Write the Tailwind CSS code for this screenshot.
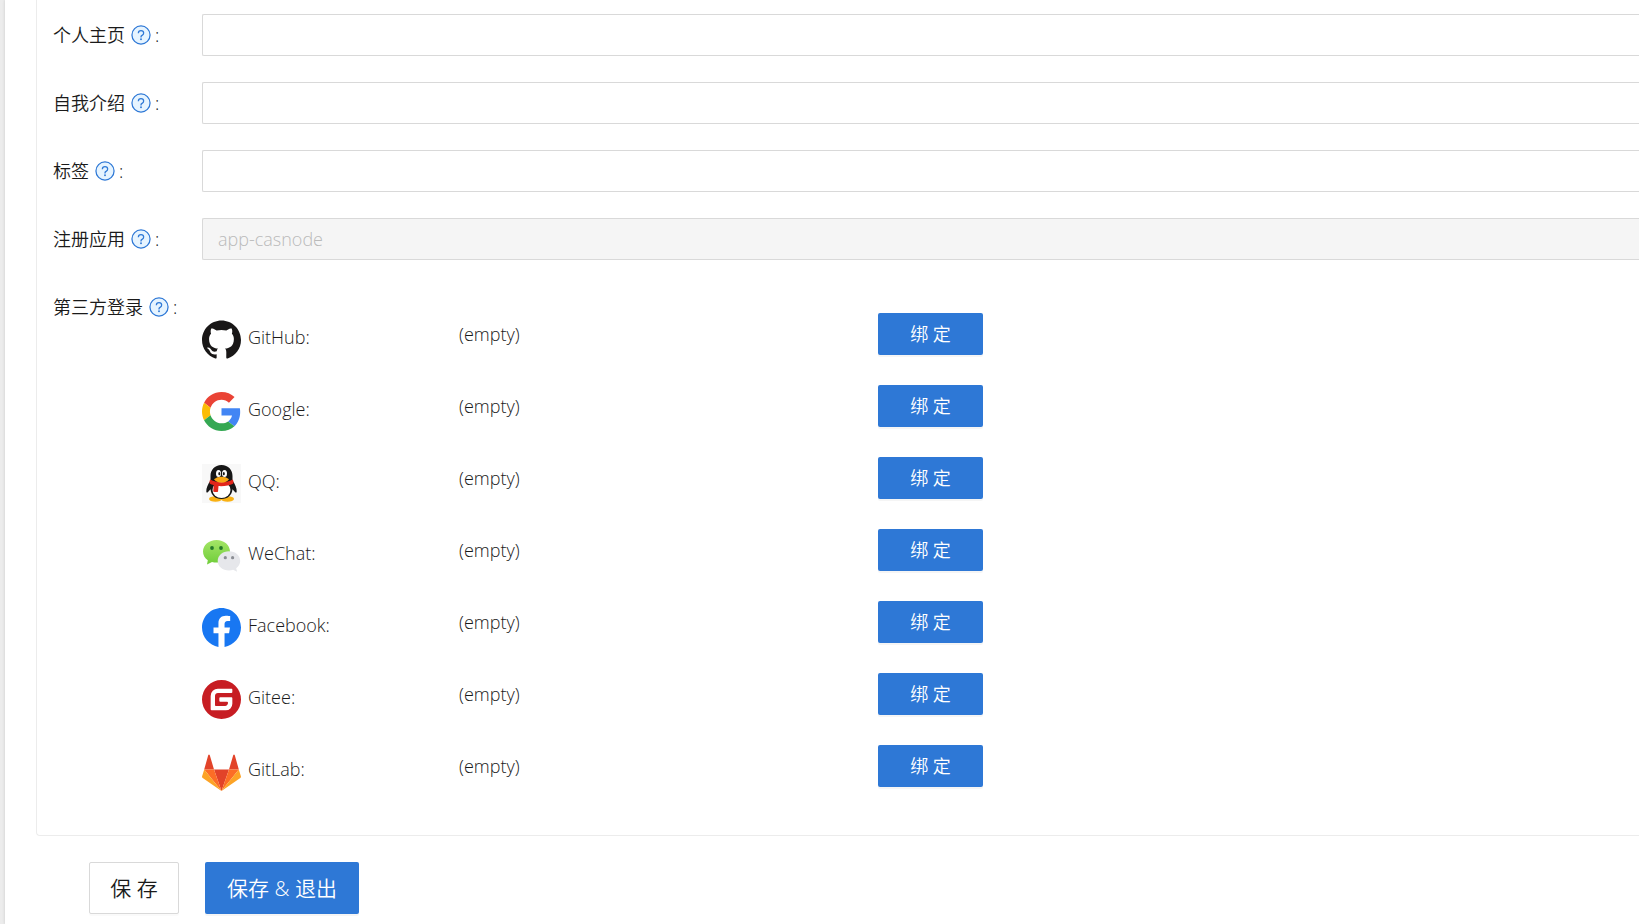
<!DOCTYPE html>
<html lang="zh-CN">
<head>
    <meta charset="UTF-8">
    <meta name="viewport" content="width=device-width, initial-scale=1.0">
    <title>编辑用户</title>
    <script src="https://cdn.jsdelivr.net/npm/@tailwindcss/browser@4"></script>
</head>
<body class="bg-[#ececec] pl-[5px] min-h-screen flex overflow-x-hidden font-['Open_Sans','Noto_Sans_CJK_SC',sans-serif] font-[350] text-[18px] text-[#1a1a1a]">
    <!-- shared icons -->
    <svg class="hidden">
        <symbol id="help" viewBox="0 0 64 64">
            <circle cx="32" cy="32" r="29" fill="#e6f4ff" stroke="#2e78d6" stroke-width="4"/>
            <path d="M23.500 26.500c0-5 3.500-8.500 8.500-8.500s8.500 3.200 8.500 7.800c0 3.700-2.200 6-5 7.400-2.300 1.100-3.500 2.300-3.500 4.600v2" fill="none" stroke="#2e78d6" stroke-width="4"/>
            <circle cx="32" cy="45.500" r="3" fill="#2e78d6"/>
        </symbol>
    </svg>

    <main class="flex-1 min-w-0 bg-white shadow-[0_0_3px_rgba(0,0,0,0.15)]">
        <form>
            <section class="ml-[31px] border-l border-b border-[#ececec] rounded-bl-sm pl-4 pt-3.5 pb-11">
                <div class="flex flex-col gap-[26px]">
                    <div class="flex items-center">
                        <label for="homepage" class="w-[149px] shrink-0 flex items-center leading-6">个人主页<svg class="size-5 ml-1.5 mr-1"><use href="#help"/></svg>:</label>
                        <input id="homepage" type="text" class="flex-1 min-w-0 h-[42px] px-[15px] border border-r-0 border-[#d9d9d9] rounded-l-xs">
                    </div>
                    <div class="flex items-center">
                        <label for="bio" class="w-[149px] shrink-0 flex items-center leading-6">自我介绍<svg class="size-5 ml-1.5 mr-1"><use href="#help"/></svg>:</label>
                        <input id="bio" type="text" class="flex-1 min-w-0 h-[42px] px-[15px] border border-r-0 border-[#d9d9d9] rounded-l-xs">
                    </div>
                    <div class="flex items-center">
                        <label for="tag" class="w-[149px] shrink-0 flex items-center leading-6">标签<svg class="size-5 ml-1.5 mr-1"><use href="#help"/></svg>:</label>
                        <input id="tag" type="text" class="flex-1 min-w-0 h-[42px] px-[15px] border border-r-0 border-[#d9d9d9] rounded-l-xs">
                    </div>
                    <div class="flex items-center">
                        <label for="app" class="w-[149px] shrink-0 flex items-center leading-6">注册应用<svg class="size-5 ml-1.5 mr-1"><use href="#help"/></svg>:</label>
                        <input id="app" type="text" value="app-casnode" disabled class="flex-1 min-w-0 h-[42px] px-[15px] border border-r-0 border-[#d9d9d9] rounded-l-xs bg-[#f5f5f5] text-[#bababa]">
                    </div>
                    <div class="flex items-start">
                        <div class="w-[149px] shrink-0 flex items-center leading-6 pt-[9px]">第三方登录<svg class="size-5 ml-1.5 mr-1"><use href="#help"/></svg>:</div>

                        <ul class="flex-1 min-w-0 pt-[27px] flex flex-col gap-[26px]">
                            <li class="flex items-start">
                                <div class="w-[257px] pt-[7px] flex items-start gap-[7px] leading-[34px]">
                                    <svg class="size-[39px]" viewBox="0 0 24 24" fill="#191717"><path d="M12 .297c-6.630 0-12 5.373-12 12 0 5.303 3.438 9.800 8.205 11.385.6.113.82-.258.82-.577 0-.285-.01-1.040-.015-2.040-3.338.724-4.042-1.610-4.042-1.610C4.422 18.070 3.633 17.700 3.633 17.700c-1.087-.744.084-.729.084-.729 1.205.084 1.838 1.236 1.838 1.236 1.070 1.835 2.809 1.305 3.495.998.108-.776.417-1.305.760-1.605-2.665-.3-5.466-1.332-5.466-5.930 0-1.310.465-2.380 1.235-3.220-.135-.303-.54-1.523.105-3.176 0 0 1.005-.322 3.300 1.230.96-.267 1.980-.399 3-.405 1.020.006 2.040.138 3 .405 2.280-1.552 3.285-1.230 3.285-1.230.645 1.653.24 2.873.12 3.176.765.840 1.230 1.910 1.230 3.220 0 4.610-2.805 5.625-5.475 5.920.42.360.81 1.096.81 2.220 0 1.606-.015 2.896-.015 3.286 0 .315.21.690.825.570C20.565 22.092 24 17.592 24 12.297c0-6.627-5.373-12-12-12"/></svg>
                                    GitHub:
                                </div>
                                <span class="w-[419px] leading-[42px]">(empty)</span>
                                <button type="button" class="w-[105px] h-[42px] rounded-xs bg-[#2e78d6] text-white shadow-[0_2px_0_rgba(0,0,0,0.04)]">绑 定</button>
                            </li>
                            <li class="flex items-start">
                                <div class="w-[257px] pt-[7px] flex items-start gap-[7px] leading-[34px]">
                                    <svg class="size-[39px]" viewBox="0 0 48 48">
                                        <path fill="#ea4335" d="M24 9.500c3.540 0 6.710 1.220 9.210 3.600l6.850-6.850C35.900 2.380 30.470 0 24 0 14.620 0 6.510 5.380 2.560 13.220l7.980 6.190C12.430 13.720 17.740 9.500 24 9.500z"/>
                                        <path fill="#4285f4" d="M46.980 24.550c0-1.570-.15-3.090-.38-4.550H24v9.020h12.940c-.58 2.960-2.260 5.480-4.780 7.180l7.730 6c4.510-4.180 7.090-10.360 7.090-17.650z"/>
                                        <path fill="#fbbc05" d="M10.530 28.590c-.48-1.450-.76-2.990-.76-4.590s.27-3.140.76-4.590l-7.980-6.190C.92 16.460 0 20.120 0 24c0 3.880.92 7.540 2.560 10.780l7.970-6.190z"/>
                                        <path fill="#34a853" d="M24 48c6.480 0 11.930-2.130 15.890-5.810l-7.730-6c-2.150 1.450-4.920 2.300-8.160 2.300-6.260 0-11.570-4.220-13.470-9.910l-7.980 6.190C6.510 42.620 14.620 48 24 48z"/>
                                    </svg>
                                    Google:
                                </div>
                                <span class="w-[419px] leading-[42px]">(empty)</span>
                                <button type="button" class="w-[105px] h-[42px] rounded-xs bg-[#2e78d6] text-white shadow-[0_2px_0_rgba(0,0,0,0.04)]">绑 定</button>
                            </li>
                            <li class="flex items-start">
                                <div class="w-[257px] pt-[7px] flex items-start gap-[7px] leading-[34px]">
                                    <svg class="size-[39px]" viewBox="0 0 39 39">
                                        <rect width="39" height="39" fill="#f8f8f8"/>
                                        <ellipse cx="13.500" cy="35" rx="6.500" ry="2.700" fill="#f9b114"/>
                                        <ellipse cx="25.500" cy="35" rx="6.500" ry="2.700" fill="#f9b114"/>
                                        <path fill="#171717" d="M19.500 1C12.500 1 8.500 6 8.500 12v4.500C6 20 4 24.500 4.300 27.500c.2 1.800 1.200 1.300 2.200.1l2-2.300C9 31 13 35 19.500 35s10.500-4 11-9.700l2 2.300c1 1.200 2 1.700 2.200-.1.300-3-1.700-7.500-4.200-11V12C30.500 6 26.500 1 19.500 1z"/>
                                        <ellipse cx="19.500" cy="26" rx="9" ry="8" fill="#fff"/>
                                        <path fill="#e1251b" d="M8.300 15.500c6 3.700 16.400 3.700 22.400 0 .9 1.500 1 3 .3 4.200-3.500 1.800-9 2.800-14.500 2.400l-.5 5.700c-1.700.4-3.300.3-4.800-.4l.5-6.400c-1.500-.3-2.800-.8-3.700-1.300-.7-1.200-.6-2.700.3-4.200z"/>
                                        <ellipse cx="16.500" cy="9.500" rx="2.500" ry="3.500" fill="#fff"/>
                                        <ellipse cx="22.500" cy="9.500" rx="2.500" ry="3.500" fill="#fff"/>
                                        <ellipse cx="17.300" cy="9.700" rx="1" ry="1.600" fill="#171717"/>
                                        <ellipse cx="21.800" cy="9.700" rx="1" ry="1.600" fill="#171717"/>
                                        <path fill="#f9a716" d="M12 15.200c2-1.700 4.500-2.500 7.500-2.500s5.500.8 7.500 2.500c-1.500 2.200-4.300 3.400-7.500 3.400s-6-1.200-7.500-3.400z"/>
                                    </svg>
                                    QQ:
                                </div>
                                <span class="w-[419px] leading-[42px]">(empty)</span>
                                <button type="button" class="w-[105px] h-[42px] rounded-xs bg-[#2e78d6] text-white shadow-[0_2px_0_rgba(0,0,0,0.04)]">绑 定</button>
                            </li>
                            <li class="flex items-start">
                                <div class="w-[257px] pt-[7px] flex items-start gap-[7px] leading-[34px]">
                                    <svg class="size-[39px]" viewBox="0 0 39 39">
                                        <defs>
                                            <linearGradient id="wechat" x2="0" y2="1"><stop stop-color="#a4e567"/><stop offset="1" stop-color="#6fcd39"/></linearGradient>
                                        </defs>
                                        <path fill="url(#wechat)" d="M14.500 4C7 4 1 9 1 15.500c0 3.600 1.800 6.600 4.800 8.700L5 28.500l5-2.500c1.500.4 3 .6 4.500.6C22 26.600 28 22 28 15.500S22 4 14.500 4z"/>
                                        <circle cx="10" cy="12" r="1.900" fill="#267a2b"/>
                                        <circle cx="19" cy="12" r="1.900" fill="#267a2b"/>
                                        <path fill="#e6e7eb" d="M27 15.300c-6.300 0-11.300 4.200-11.300 9.600s5 9.500 11.300 9.500c1.500 0 2.900-.2 4.100-.6l4 2-.9-3.600c2.400-1.700 4-4.400 4-7.300 0-5.400-4.900-9.600-11.200-9.600z"/>
                                        <circle cx="23.300" cy="21.700" r="1.600" fill="#8b8e94"/>
                                        <circle cx="30.600" cy="21.700" r="1.600" fill="#8b8e94"/>
                                    </svg>
                                    WeChat:
                                </div>
                                <span class="w-[419px] leading-[42px]">(empty)</span>
                                <button type="button" class="w-[105px] h-[42px] rounded-xs bg-[#2e78d6] text-white shadow-[0_2px_0_rgba(0,0,0,0.04)]">绑 定</button>
                            </li>
                            <li class="flex items-start">
                                <div class="w-[257px] pt-[7px] flex items-start gap-[7px] leading-[34px]">
                                    <svg class="size-[39px]" viewBox="0 0 24 24">
                                        <path fill="#1877f2" d="M24 12.073c0-6.627-5.373-12-12-12s-12 5.373-12 12c0 5.990 4.388 10.954 10.125 11.854v-8.385H7.078v-3.470h3.047V9.430c0-3.007 1.792-4.669 4.533-4.669 1.312 0 2.686.235 2.686.235v2.953H15.830c-1.491 0-1.956.925-1.956 1.874v2.250h3.328l-.532 3.470h-2.796v8.385C19.612 23.027 24 18.062 24 12.073z"/>
                                    </svg>
                                    Facebook:
                                </div>
                                <span class="w-[419px] leading-[42px]">(empty)</span>
                                <button type="button" class="w-[105px] h-[42px] rounded-xs bg-[#2e78d6] text-white shadow-[0_2px_0_rgba(0,0,0,0.04)]">绑 定</button>
                            </li>
                            <li class="flex items-start">
                                <div class="w-[257px] pt-[7px] flex items-start gap-[7px] leading-[34px]">
                                    <svg class="size-[39px]" viewBox="0 0 24 24">
                                        <path fill="#c71d23" d="M11.984 0A12 12 0 0 0 0 12a12 12 0 0 0 12 12 12 12 0 0 0 12-12A12 12 0 0 0 12 0a12 12 0 0 0-.016 0zm6.090 5.333c.328 0 .593.266.592.593v1.482a.594.594 0 0 1-.593.592H9.777c-.982 0-1.778.796-1.778 1.778v5.630c0 .327.266.592.593.592h5.630c.982 0 1.778-.796 1.778-1.778v-.296a.593.593 0 0 0-.592-.593h-4.150a.592.592 0 0 1-.592-.592v-1.482a.593.593 0 0 1 .593-.592h6.815c.327 0 .593.265.593.592v3.408a4 4 0 0 1-4 4H5.926a.593.593 0 0 1-.593-.593V9.778a4.444 4.444 0 0 1 4.445-4.444h8.296z"/>
                                    </svg>
                                    Gitee:
                                </div>
                                <span class="w-[419px] leading-[42px]">(empty)</span>
                                <button type="button" class="w-[105px] h-[42px] rounded-xs bg-[#2e78d6] text-white shadow-[0_2px_0_rgba(0,0,0,0.04)]">绑 定</button>
                            </li>
                            <li class="flex items-start">
                                <div class="w-[257px] pt-[7px] flex items-start gap-[7px] leading-[34px]">
                                    <svg class="size-[39px]" viewBox="0 -1 39 39">
                                        <path fill="#e24329" d="M19.500 38L27 16.500H12zM2.200 16.500L6.200 2.200q.8-1.500 1.600 0L12 16.500zM36.800 16.500L32.800 2.200q-.8-1.500-1.600 0L27 16.500z"/>
                                        <path fill="#fc6d26" d="M19.500 38L12 16.500H2.200zM19.500 38L27 16.500h9.800z"/>
                                        <path fill="#fca326" d="M2.200 16.500L.1 23.300q-.3 1 .6 1.700L19.500 38zM36.800 16.500l2.100 6.800q.3 1-.6 1.700L19.500 38z"/>
                                    </svg>
                                    GitLab:
                                </div>
                                <span class="w-[419px] leading-[42px]">(empty)</span>
                                <button type="button" class="w-[105px] h-[42px] rounded-xs bg-[#2e78d6] text-white shadow-[0_2px_0_rgba(0,0,0,0.04)]">绑 定</button>
                            </li>
                        </ul>
                    </div>
                </div>
            </section>

            <div class="flex gap-[26px] pl-[84px] pt-[26px] pb-2.5 text-[21px]">
                <button type="button" class="w-[90px] h-[52px] pt-0.5 rounded-xs border border-[#d9d9d9] bg-white shadow-[0_2px_0_rgba(0,0,0,0.02)]">保 存</button>
                <button type="submit" class="w-[154px] h-[52px] pt-0.5 rounded-xs bg-[#2e78d6] text-white shadow-[0_2px_0_rgba(0,0,0,0.04)]">保存 &amp; 退出</button>
            </div>
        </form>
    </main>
</body>
</html>
